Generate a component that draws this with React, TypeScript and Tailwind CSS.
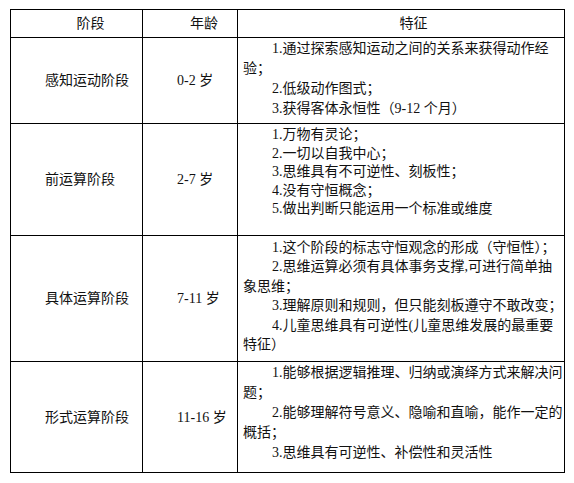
import { Fragment } from 'react';

const font = { fontFamily: '"Liberation Serif", "Noto Sans CJK SC", serif' };

type Stage = {
  name: string;
  age: string;
  lines: { text: string; indent: boolean }[];
  pad: string;
  leading: string;
};

const stages: Stage[] = [
  {
    name: '感知运动阶段',
    age: '0-2 岁',
    pad: 'pt-[1px]',
    leading: 'leading-[20px]',
    lines: [
      { text: '1.通过探索感知运动之间的关系来获得动作经', indent: true },
      { text: '验；', indent: false },
      { text: '2.低级动作图式；', indent: true },
      { text: '3.获得客体永恒性（9-12 个月）', indent: true },
    ],
  },
  {
    name: '前运算阶段',
    age: '2-7 岁',
    pad: 'pt-[2px]',
    leading: 'leading-[18.5px]',
    lines: [
      { text: '1.万物有灵论；', indent: true },
      { text: '2.一切以自我中心；', indent: true },
      { text: '3.思维具有不可逆性、刻板性；', indent: true },
      { text: '4.没有守恒概念；', indent: true },
      { text: '5.做出判断只能运用一个标准或维度', indent: true },
    ],
  },
  {
    name: '具体运算阶段',
    age: '7-11 岁',
    pad: 'pt-[2px]',
    leading: 'leading-[19.4px]',
    lines: [
      { text: '1.这个阶段的标志守恒观念的形成（守恒性）；', indent: true },
      { text: '2.思维运算必须有具体事务支撑,可进行简单抽', indent: true },
      { text: '象思维；', indent: false },
      { text: '3.理解原则和规则，但只能刻板遵守不敢改变；', indent: true },
      { text: '4.儿童思维具有可逆性(儿童思维发展的最重要', indent: true },
      { text: '特征）', indent: false },
    ],
  },
  {
    name: '形式运算阶段',
    age: '11-16 岁',
    pad: 'pt-[1px]',
    leading: 'leading-[20px]',
    lines: [
      { text: '1.能够根据逻辑推理、归纳或演绎方式来解决问', indent: true },
      { text: '题；', indent: false },
      { text: '2.能够理解符号意义、隐喻和直喻，能作一定的', indent: true },
      { text: '概括；', indent: false },
      { text: '3.思维具有可逆性、补偿性和灵活性', indent: true },
    ],
  },
];

export default function App() {
  return (
    <div className="w-[574px] h-[483px] bg-white pt-[9px] pl-[10px] text-[14px] text-[#111]" style={font}>
      <div className="grid w-[555px] grid-cols-[131px_94px_326px] grid-rows-[27px_85px_111px_125px_110px] gap-px bg-black p-px">
        <div className="flex items-center justify-center bg-white pl-[28px]">阶段</div>
        <div className="flex items-center justify-center bg-white pl-[28px]">年龄</div>
        <div className="flex items-center justify-center bg-white pl-[25px]">特征</div>

        {stages.map((s) => (
          <Fragment key={s.name}>
            <div className="flex items-center bg-white pl-[34px]">{s.name}</div>
            <div className="flex items-center bg-white pl-[34px]">{s.age}</div>
            <div className={`bg-white px-[5px] ${s.pad} ${s.leading}`}>
              {s.lines.map((l, i) => (
                <div key={i} className={`whitespace-nowrap ${l.indent ? 'pl-[29px]' : ''}`}>
                  {l.text}
                </div>
              ))}
            </div>
          </Fragment>
        ))}
      </div>
    </div>
  );
}
